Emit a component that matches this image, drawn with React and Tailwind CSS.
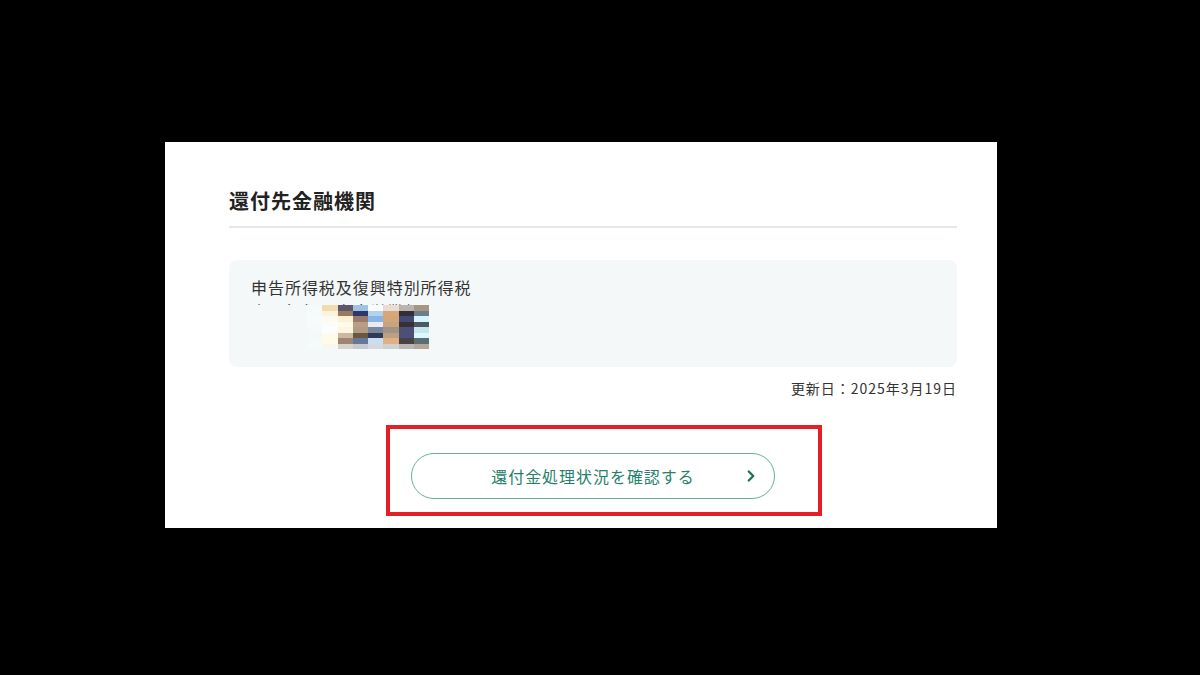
import { ChevronRight } from 'lucide-react'

// pixelated block that hides the account line
const MOSAIC = [
  ['#f6fafb', '#f3dbad', '#5d5571', '#a0c3e3', '#fbfcfd', '#ecdccf', '#bbb4ac', '#a89685'],
  ['#f5fafb', '#fcf2dd', '#9b7b5f', '#2c386a', '#b0d3ee', '#d6a879', '#322f37', '#697d8a'],
  ['#f8fbfc', '#fffaf0', '#fff2d2', '#9a7b6b', '#88b4e8', '#d3a676', '#3f4a78', '#d5f4fb'],
  ['#f7fbfc', '#fbfcfd', '#fffbe9', '#b99d87', '#e8ecf2', '#caa27c', '#3a3032', '#4c5a66'],
  ['#f5f9fa', '#fdfdfe', '#fff6e0', '#b49a84', '#78879f', '#9e9584', '#4d4f74', '#c8e4ee'],
  ['#f3f8f9', '#fbfbee', '#ccb8a0', '#6b5843', '#2f3a55', '#bfa07e', '#4b4f7c', '#d8fafe'],
  ['#f4f9fa', '#fffbe6', '#9f8472', '#65789a', '#c9def2', '#e2b083', '#474243', '#5d6c76'],
  ['#f6fafb', '#f7f7ee', '#d8d2cd', '#c4c8d0', '#d4d9dd', '#cfd0d0', '#b8b7b0', '#b2a898'],
]

function Mosaic() {
  return (
    <div className="ml-[56px] grid w-[122px] grid-cols-8">
      {MOSAIC.flat().map((c, i) => (
        <div key={i} className="h-[5.5px]" style={{ backgroundColor: c }} />
      ))}
    </div>
  )
}

function RefundButton() {
  return (
    <div className="relative">
      <button className="flex h-[46px] w-[364px] items-center rounded-full border-[1.5px] border-[#64b19a] bg-white pl-[32px] pr-[14px] text-[#27806a]">
        <span className="flex-1 text-center text-base tracking-[0.06em]">還付金処理状況を確認する</span>
        <ChevronRight className="h-[18px] w-[18px] text-[#17705a]" strokeWidth={3} />
      </button>
      {/* highlight frame drawn over the button */}
      <div className="pointer-events-none absolute -bottom-[17px] -left-[25px] -right-[47px] -top-[28px] border-4 border-[#e41f26]" />
    </div>
  )
}

export default function App() {
  return (
    <div
      className="h-[675px] w-[1200px] bg-black pl-[165px] pt-[142px] text-[#333]"
      style={{ fontFamily: '"Noto Sans CJK JP", "Noto Sans", sans-serif' }}
    >
      <section className="h-[386px] w-[832px] overflow-hidden bg-white pl-[64px] pr-[40px] pt-[44px]">
        <h2 className="border-b-2 border-[#e3e8ea] pb-[10px] text-[20px] font-bold leading-[30px] tracking-[0.05em] text-[#222]">
          還付先金融機関
        </h2>

        <div className="mt-[32px] h-[107px] rounded-lg bg-[#f5f8f9] pl-[22px] pt-[15px]">
          <p className="text-base leading-[24px] tracking-[0.06em]">申告所得税及復興特別所得税</p>
          <div className="h-[6px] overflow-hidden">
            <p className="text-base leading-[24px] tracking-[0.06em]">大阪銀行　本店営業部</p>
          </div>
          <Mosaic />
        </div>

        <p className="mt-[11px] text-right text-sm leading-[20px] tracking-[0.07em]">更新日：2025年3月19日</p>

        <div className="mt-[55px] flex justify-center">
          <RefundButton />
        </div>
      </section>
    </div>
  )
}
